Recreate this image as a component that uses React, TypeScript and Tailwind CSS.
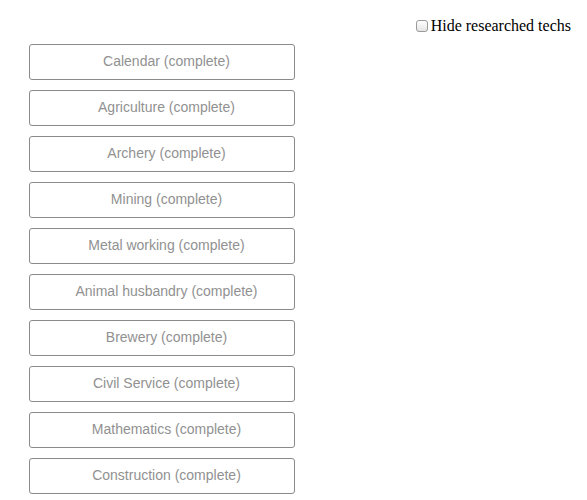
import { useState } from 'react';

const techs = [
  'Calendar',
  'Agriculture',
  'Archery',
  'Mining',
  'Metal working',
  'Animal husbandry',
  'Brewery',
  'Civil Service',
  'Mathematics',
  'Construction',
];

export default function App() {
  const [hide, setHide] = useState(false);

  return (
    <div className="min-h-screen bg-white">
      {/* Filter toggle */}
      <div className="flex justify-end pt-[17px] pr-[16px]">
        <label
          className="flex items-center text-[16px] leading-[18px] text-black"
          style={{ fontFamily: '"Liberation Serif", "Times New Roman", serif' }}
        >
          <input
            type="checkbox"
            checked={hide}
            onChange={() => setHide(!hide)}
            className="appearance-none w-[12px] h-[12px] mr-[3px] rounded-[3px] border border-[#9a9a9a] bg-gradient-to-b from-white to-[#e4e4e4]"
          />
          Hide researched techs
        </label>
      </div>

      {/* Tech list */}
      <div
        className="flex flex-col gap-[10px] pl-[29px] pt-[9px]"
        style={{ fontFamily: '"Liberation Sans", Arial, sans-serif' }}
      >
        {techs.map((t) => (
          <button
            key={t}
            className="w-[266px] h-[36px] pl-[9px] pb-[1px] rounded-[3px] border border-[#8a8a8a] bg-white text-[14px] text-[#919191] flex items-center justify-center"
          >
            {t} (complete)
          </button>
        ))}
      </div>
    </div>
  );
}
